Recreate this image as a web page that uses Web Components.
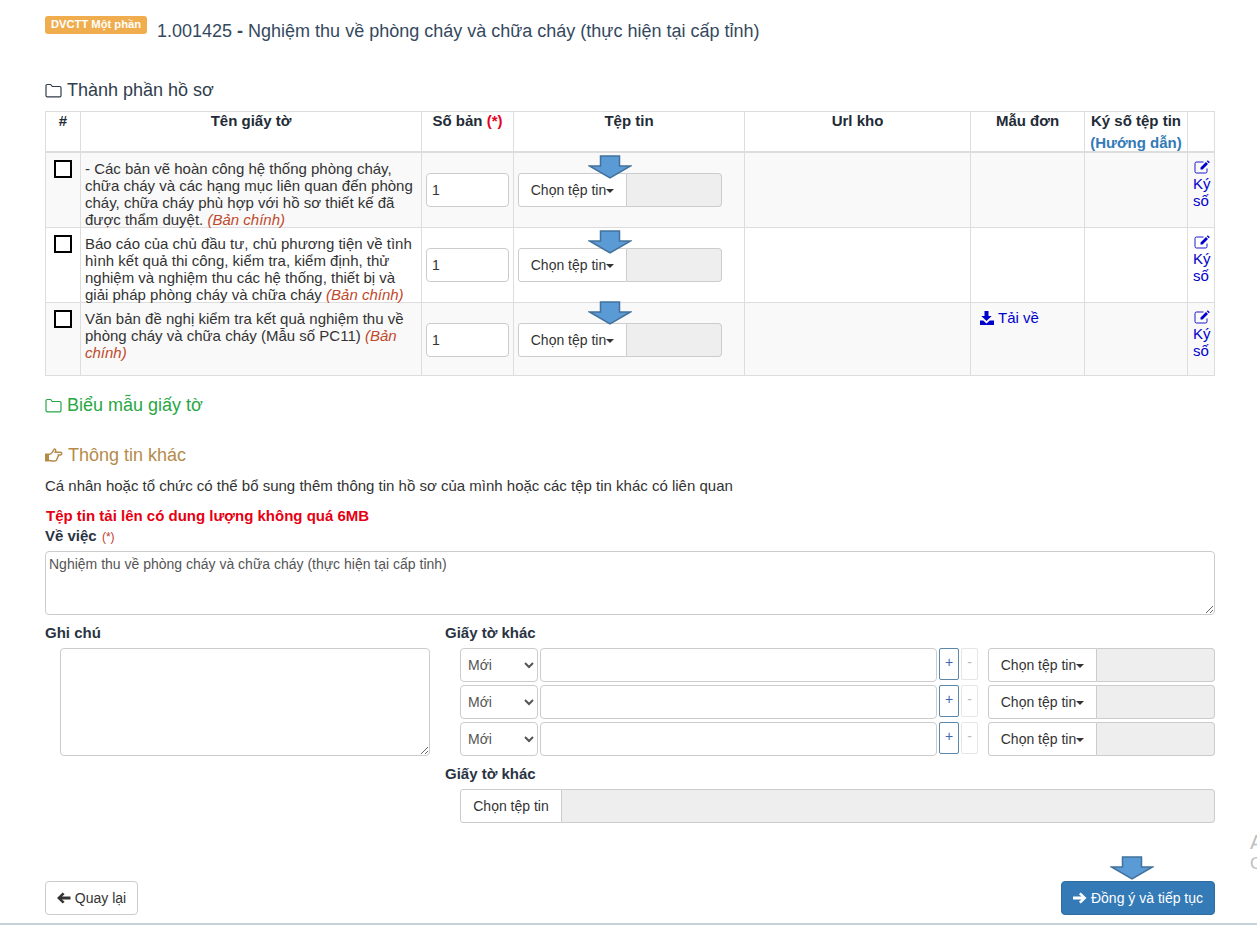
<!DOCTYPE html>
<html lang="vi">
<head>
<meta charset="utf-8">
<title>Nghiệm thu về phòng cháy và chữa cháy</title>
<style>
  html, body { margin: 0; height: 925px; overflow: hidden; background: #fff; }
  body { font: 15px/17px "Liberation Sans", Arial, sans-serif; color: #333; }
</style>
</head>
<body>
<app-page></app-page>

<script>
const ICONS = {
  folder: `<path d="M1 12.500V2.800A1.300 1.300 0 0 1 2.300 1.500h3.400l1.600 2h7.400a1.300 1.300 0 0 1 1.300 1.300v7.700a1.300 1.300 0 0 1-1.300 1.300H2.300A1.300 1.300 0 0 1 1 12.500z" fill="none" stroke="currentColor" stroke-width="1.200"/>`,
  hand: `<path d="M0 6.500h4v8H0z" fill="currentColor"/><path d="M4 7.500c2 0 3-1.600 4-3.200.6-1 .7-2.400 1.600-2.400 1.200 0 1.400 1.600.7 3.400h5.200c1.700 0 1.700 2.600 0 2.600h-2.200c.4 1.200-.1 1.900-.7 2.200.2 1-.2 1.700-.9 2 .1 1.200-.7 1.900-2 1.900H7.500c-1.300 0-2.200-.6-3.500-.6" fill="none" stroke="currentColor" stroke-width="1.500"/>`,
  download: `<path d="M4.500 0h4v5h3.200L6.500 10 1.300 5h3.200z" fill="currentColor"/><path d="M0 9.500h3.200L6.500 12.500 9.800 9.500H14V14H0z" fill="currentColor"/>`,
  edit: `<path d="M13 9.500v3a1.500 1.500 0 0 1-1.500 1.500h-9A1.500 1.500 0 0 1 1 12.500v-8A1.500 1.500 0 0 1 2.500 3H9.500" fill="none" stroke="currentColor" stroke-width=".9"/><path d="M6.500 8.500 12 3 14 5 8.500 10.500H6.500zM12.800 2.200 13.800 1.200 15.800 3.200 14.800 4.200z" fill="currentColor"/>`,
  left: `<path d="M0 6 5.700.4 7.600 2.300 5 4.600h8.500v2.800H5l2.600 2.300-1.900 1.900z" fill="currentColor"/>`,
  right: `<path d="M13.500 6 7.800.4 5.900 2.300l2.600 2.300H0v2.800h8.500l-2.600 2.300 1.900 1.900z" fill="currentColor"/>`,
};

class UiIcon extends HTMLElement {
  connectedCallback() {
    const w = this.getAttribute("w") || 14;
    const h = this.getAttribute("h") || 14;
    this.attachShadow({ mode: "open" }).innerHTML = `
      <style>:host { display: inline-block; line-height: 0; } svg { display: block; }</style>
      <svg width="${w}" height="${h}" viewBox="0 0 ${w} ${h}">${ICONS[this.getAttribute("name")]}</svg>`;
  }
}

// the big blue arrow somebody pasted over the screenshot
class DownArrow extends HTMLElement {
  connectedCallback() {
    this.attachShadow({ mode: "open" }).innerHTML = `
      <style>:host { position: absolute; display: block; width: 44px; height: 24px; z-index: 2; } svg { display: block; }</style>
      <svg width="44" height="24" viewBox="0 0 44 24">
        <path d="M12.500 1h19v10h11L22 23 1.500 11h11z" fill="#5b9bd5" stroke="#41719c" stroke-width="1.500"/>
      </svg>`;
  }
}

class FilePick extends HTMLElement {
  connectedCallback() {
    const caret = this.hasAttribute("caret");
    this.attachShadow({ mode: "open" }).innerHTML = `
      <style>
        :host { display: flex; height: 34px; width: var(--pick-width, 100%); box-sizing: border-box; font-size: 14px; }
        .btn {
          box-sizing: border-box;
          width: var(--btn-width, 109px);
          flex: none;
          display: flex;
          align-items: center;
          justify-content: center;
          background: #fff;
          border: 1px solid #ccc;
          border-radius: 3px 0 0 3px;
          color: #333;
          white-space: nowrap;
        }
        .caret {
          width: 0; height: 0;
          margin-top: 1px;
          border-left: 4px solid transparent;
          border-right: 4px solid transparent;
          border-top: 4px solid #333;
        }
        .name {
          flex: 1;
          background: #eee;
          border: 1px solid #ccc;
          border-left: 0;
          border-radius: 0 4px 4px 0;
        }
      </style>
      <div class="btn">Chọn tệp tin${caret ? '<span class="caret"></span>' : ""}</div>
      <div class="name"></div>`;
  }
}

class SectionTitle extends HTMLElement {
  connectedCallback() {
    this.attachShadow({ mode: "open" }).innerHTML = `
      <style>
        :host { display: flex; align-items: center; gap: 5px; font-size: 18px; line-height: 20px; color: var(--title-color, #2f3d4c); }
      </style>
      <slot name="icon"></slot><slot></slot>`;
  }
}

const DOCS = [
  {
    text: "- Các bản vẽ hoàn công hệ thống phòng cháy, chữa cháy và các hạng mục liên quan đến phòng cháy, chữa cháy phù hợp với hồ sơ thiết kế đã được thẩm duyệt.",
    arrowTop: 2,
  },
  {
    text: "Báo cáo của chủ đầu tư, chủ phương tiện về tình hình kết quả thi công, kiểm tra, kiểm định, thử nghiệm và nghiệm thu các hệ thống, thiết bị và giải pháp phòng cháy và chữa cháy",
    arrowTop: 2,
  },
  {
    text: "Văn bản đề nghị kiểm tra kết quả nghiệm thu về phòng cháy và chữa cháy (Mẫu số PC11)",
    arrowTop: -2,
    template: true,
  },
];

class DocTable extends HTMLElement {
  connectedCallback() {
    const rows = DOCS.map((doc) => `
      <tr>
        <td class="check"><span class="box"></span></td>
        <td class="name"><div>${doc.text} <em>(Bản chính)</em></div></td>
        <td class="count"><input type="text" value="1"></td>
        <td class="file">
          <down-arrow style="left:74px;top:${doc.arrowTop}px"></down-arrow>
          <file-pick caret style="--pick-width:204px"></file-pick>
        </td>
        <td></td>
        <td class="tpl">${doc.template ? '<a><ui-icon name="download" style="margin-right:4px"></ui-icon>Tải về</a>' : ""}</td>
        <td></td>
        <td class="sign"><a><ui-icon name="edit" w="16" h="16"></ui-icon>Ký số</a></td>
      </tr>`).join("");

    this.attachShadow({ mode: "open" }).innerHTML = `
      <style>
        :host { display: block; }
        table { border-collapse: collapse; table-layout: fixed; width: 1169px; }
        th, td { border: 1px solid #ddd; padding: 0; vertical-align: top; }
        th { height: 39px; font-weight: bold; text-align: center; line-height: 17px; color: #222b36; box-sizing: border-box; border-bottom-width: 2px; }
        th .req { color: #e60023; }
        th a { display: block; margin-top: 5px; color: #337ab7; }
        tbody tr:nth-child(odd) { background: #f9f9f9; }
        td.check { padding: 7px 0 0 8px; }
        .box { display: block; box-sizing: border-box; width: 18px; height: 18px; background: #fff; border: 2px solid #000; }
        td.name { padding: 7px 4px 0; height: 73px; box-sizing: border-box; }
        td.name div { margin-bottom: -1px; }
        em { color: #c0492c; }
        td.count { padding: 20px 4px 17px; }
        input { display: block; box-sizing: border-box; width: 83px; height: 34px; padding: 0 5px; border: 1px solid #ccc; border-radius: 4px; font: 14px "Liberation Sans", Arial, sans-serif; color: #333; background: #fff; }
        td.file { position: relative; padding: 20px 4px 17px; }
        td.tpl { padding: 6px 9px 0; }
        td.tpl a { display: flex; align-items: center; color: #0000cc; }
        td.sign { padding: 6px 0 0 5px; color: #0000cc; }
        td.sign ui-icon { display: block; margin: 0 0 0 1px; }
      </style>
      <table>
        <colgroup>
          <col style="width:35px"><col style="width:341px"><col style="width:92px"><col style="width:231px">
          <col style="width:226px"><col style="width:114px"><col style="width:103px"><col style="width:27px">
        </colgroup>
        <thead>
          <tr>
            <th>#</th><th>Tên giấy tờ</th><th>Số bản <span class="req">(*)</span></th><th>Tệp tin</th>
            <th>Url kho</th><th>Mẫu đơn</th><th>Ký số tệp tin<a>(Hướng dẫn)</a></th><th></th>
          </tr>
        </thead>
        <tbody>${rows}</tbody>
      </table>`;
  }
}

class OtherRow extends HTMLElement {
  connectedCallback() {
    this.attachShadow({ mode: "open" }).innerHTML = `
      <style>
        :host { display: flex; height: 37px; align-items: flex-start; }
        select { box-sizing: border-box; width: 78px; height: 34px; padding: 0 3px; margin: 0; background: #fff; border: 1px solid #ccc; border-radius: 4px; font: 14px "Liberation Sans", Arial, sans-serif; color: #555; }
        input { box-sizing: border-box; width: 397px; height: 34px; margin-left: 2px; border: 1px solid #ccc; border-radius: 4px; background: #fff; }
        .act { box-sizing: border-box; height: 32px; margin-left: 2px; display: flex; align-items: center; justify-content: center; padding-bottom: 4px; border-radius: 2px; background: #fff; font-size: 14px; }
        .add { width: 20px; border: 1px solid #5b87a8; color: #3f66b5; }
        .del { width: 17px; border: 1px solid #e6e6e6; color: #bbb; }
        file-pick { margin-left: 10px; --pick-width: 227px; }
      </style>
      <select><option>Mới</option></select>
      <input type="text">
      <div class="act add">+</div>
      <div class="act del">-</div>
      <file-pick caret></file-pick>`;
  }
}

class PageButton extends HTMLElement {
  connectedCallback() {
    this.attachShadow({ mode: "open" }).innerHTML = `
      <style>
        :host { display: inline-flex; box-sizing: border-box; height: 34px; align-items: center; justify-content: center; gap: 4px; border-radius: 4px; border: 1px solid #ccc; background: #fff; color: #333; white-space: nowrap; font-size: 14px; }
        :host([primary]) { background: #337ab7; border-color: #2e6da4; color: #fff; }
      </style>
      <slot></slot>`;
  }
}

class AppPage extends HTMLElement {
  connectedCallback() {
    this.attachShadow({ mode: "open" }).innerHTML = `
      <style>
        :host { display: block; position: relative; box-sizing: border-box; width: 1257px; height: 925px; padding: 16px 42px 0 45px; border-bottom: 2px solid #c5d3da; overflow: hidden; }
        header { display: flex; align-items: flex-start; height: 60px; }
        .badge { box-sizing: border-box; width: 102px; height: 18px; margin-right: 10px; border-radius: 3px; background: #f0ad4e; color: #fff; font-size: 11.200px; font-weight: bold; line-height: 17px; text-align: center; }
        h1 { margin: 5px 0 0; font-size: 18px; line-height: 20px; font-weight: normal; color: #34495e; }
        h1 b { font-weight: bold; }
        .files-title { margin: 4px 0 11px; }
        .forms-title { margin: 19px 0 30px; --title-color: #28a745; }
        .more-title { margin-bottom: 11px; --title-color: #b58b4c; }
        p { margin: 0 0 10px; line-height: 20px; }
        .limit { color: #e60012; font-weight: bold; margin: 0 0 0 1px; line-height: 20px; }
        label { display: block; font-weight: bold; color: #2a3342; line-height: 20px; }
        label span { font-weight: normal; color: #c0392b; font-size: 12px; margin-left: 1px; }
        textarea { display: block; box-sizing: border-box; margin: 0; padding: 4px; border: 1px solid #ccc; border-radius: 4px; background: #fff; font: 14px/16px "Liberation Sans", Arial, sans-serif; color: #555; }
        .subject { width: 1170px; height: 64px; margin-top: 4px; padding-left: 3px; }
        .lower { display: grid; grid-template-columns: 385px 770px; column-gap: 15px; margin-top: 8px; }
        .note textarea { width: 370px; height: 108px; margin: 5px 0 0 15px; }
        .others { padding-left: 15px; margin-top: 5px; }
        .lower label.second { margin-top: 5px; }
        file-pick.all { --btn-width: 102px; margin: 5px 0 0 15px; width: 755px; }
        .actions { display: flex; justify-content: space-between; margin-top: 58px; position: relative; }
        .back { width: 93px; }
        .next { width: 154px; }
        .actions down-arrow { right: 61px; top: -25px; }
        .mark { position: absolute; left: 1250px; color: #bdbdbd; }
      </style>
      <header>
        <div class="badge">DVCTT Một phần</div>
        <h1>1.001425 <b>-</b> Nghiệm thu về phòng cháy và chữa cháy (thực hiện tại cấp tỉnh)</h1>
      </header>

      <section-title class="files-title"><ui-icon slot="icon" name="folder" w="17" h="15"></ui-icon>Thành phần hồ sơ</section-title>
      <doc-table></doc-table>

      <section-title class="forms-title"><ui-icon slot="icon" name="folder" w="17" h="15"></ui-icon>Biểu mẫu giấy tờ</section-title>
      <section-title class="more-title"><ui-icon slot="icon" name="hand" w="18" h="16"></ui-icon>Thông tin khác</section-title>

      <p>Cá nhân hoặc tổ chức có thể bổ sung thêm thông tin hồ sơ của mình hoặc các tệp tin khác có liên quan</p>
      <div class="limit">Tệp tin tải lên có dung lượng không quá 6MB</div>
      <label>Về việc <span>(*)</span></label>
      <textarea class="subject">Nghiệm thu về phòng cháy và chữa cháy (thực hiện tại cấp tỉnh)</textarea>

      <div class="lower">
        <div class="note">
          <label>Ghi chú</label>
          <textarea></textarea>
        </div>
        <div>
          <label>Giấy tờ khác</label>
          <div class="others">
            <other-row></other-row>
            <other-row></other-row>
            <other-row></other-row>
          </div>
          <label class="second">Giấy tờ khác</label>
          <file-pick class="all"></file-pick>
        </div>
      </div>

      <div class="actions">
        <page-button class="back"><ui-icon name="left" w="14" h="12"></ui-icon>Quay lại</page-button>
        <down-arrow></down-arrow>
        <page-button class="next" primary><ui-icon name="right" w="14" h="12"></ui-icon>Đồng ý và tiếp tục</page-button>
      </div>

      <div class="mark" style="top:830px;font-size:20px;line-height:24px">A</div>
      <div class="mark" style="top:855px;font-size:17px;line-height:18px">G</div>`;
  }
}

customElements.define("ui-icon", UiIcon);
customElements.define("down-arrow", DownArrow);
customElements.define("file-pick", FilePick);
customElements.define("section-title", SectionTitle);
customElements.define("doc-table", DocTable);
customElements.define("other-row", OtherRow);
customElements.define("page-button", PageButton);
customElements.define("app-page", AppPage);
</script>
</body>
</html>
